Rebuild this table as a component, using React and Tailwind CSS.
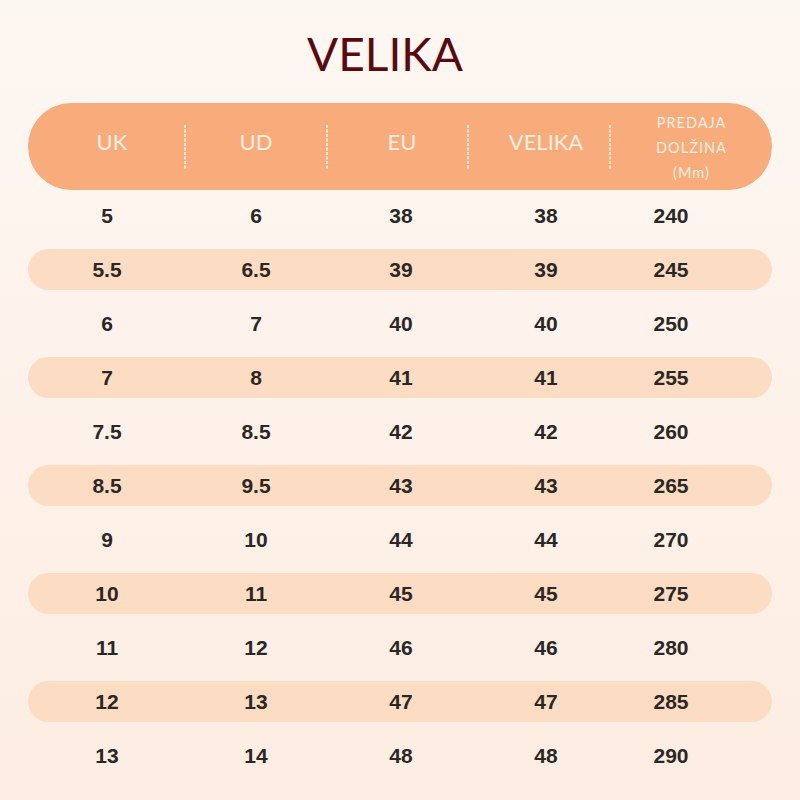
const rows = [
  ["5", "6", "38", "38", "240"],
  ["5.5", "6.5", "39", "39", "245"],
  ["6", "7", "40", "40", "250"],
  ["7", "8", "41", "41", "255"],
  ["7.5", "8.5", "42", "42", "260"],
  ["8.5", "9.5", "43", "43", "265"],
  ["9", "10", "44", "44", "270"],
  ["10", "11", "45", "45", "275"],
  ["11", "12", "46", "46", "280"],
  ["12", "13", "47", "47", "285"],
  ["13", "14", "48", "48", "290"],
];

const Divider = () => (
  <svg width="2" height="44" className="block">
    <line x1="1" y1="0" x2="1" y2="44" stroke="#fde9d8" strokeWidth="2" strokeDasharray="3 1.5" />
  </svg>
);

const App = () => {
  return (
    <div className="w-[800px] h-[800px] overflow-hidden bg-gradient-to-b from-[#fdf7f2] to-[#fdede2] pt-[31px] px-[28px] font-['Liberation_Sans',sans-serif]">
      <h1 className="h-[46px] text-center text-[46px] leading-none font-['Lato',sans-serif] font-normal text-[#5a0a0f] pr-[30px]">
        VELIKA
      </h1>

      <div className="mt-[26px] h-[87px] rounded-full bg-[#f8ab7b] grid grid-cols-[156px_2px_140px_2px_139px_2px_140px_2px_161px] items-center text-[#fdf0e2] font-['Lato',sans-serif]">
        <div className="pl-[12px] pb-[10px] text-center text-[22px]">UK</div>
        <Divider />
        <div className="pb-[10px] text-center text-[22px]">UD</div>
        <Divider />
        <div className="pl-[9px] pb-[10px] text-center text-[22px]">EU</div>
        <Divider />
        <div className="pl-[14px] pb-[10px] text-center text-[22px]">VELIKA</div>
        <Divider />
        <div className="flex flex-col items-center text-[14.5px] leading-[25px] tracking-[0.07em] pt-[2px]">
          <span>PREDAJA</span>
          <span>DOLŽINA</span>
          <span>(Mm)</span>
        </div>
      </div>

      <div className="mt-[5px] flex flex-col gap-[13px]">
        {rows.map((r, i) => (
          <div
            key={i}
            className={
              "h-[41px] rounded-full grid grid-cols-[158px_140px_150px_140px_110px] items-center text-[21px] font-bold text-[#2b2724] " +
              (i % 2 === 1 ? "bg-[#fcdcc3]" : "")
            }
          >
            {r.map((v, j) => (
              <div key={j} className="text-center">
                {v}
              </div>
            ))}
          </div>
        ))}
      </div>
    </div>
  );
};

export default App;
